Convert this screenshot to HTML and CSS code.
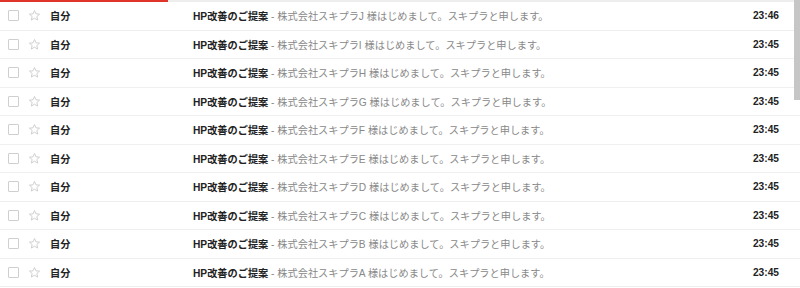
FILE: index.html
```html
<!DOCTYPE html>
<html lang="ja">
<head>
<meta charset="utf-8">
<link rel="stylesheet" href="styles.css">
</head>
<body>
<div class="page">
  <div class="progress"><div class="progress-fill"></div></div>
  <div class="list" id="list"></div>
  <div class="scroll-thumb"></div>
</div>
<template id="row">
  <div class="row">
    <span class="check"></span>
    <svg class="star" viewBox="0 0 24 24" width="13" height="13"><path d="M12 2.8l2.75 6.1 6.6.6-5 4.4 1.5 6.5L12 17l-5.85 3.4 1.5-6.5-5-4.4 6.6-.6z" fill="none" stroke="#c8c8c8" stroke-width="1.6" stroke-linejoin="round"/></svg>
    <span class="sender">自分</span>
    <span class="subject"><b>HP改善のご提案</b><span class="snippet"> - 株式会社スキプラ<span class="letter"></span> 様はじめまして。スキプラと申します。</span></span>
    <span class="time"></span>
  </div>
</template>
<script>
  var letters = ["J","I","H","G","F","E","D","C","B","A"];
  var list = document.getElementById("list");
  var tpl = document.getElementById("row");
  letters.forEach(function (l, i) {
    var n = tpl.content.cloneNode(true);
    n.querySelector(".letter").textContent = l;
    n.querySelector(".time").textContent = i === 0 ? "23:46" : "23:45";
    list.appendChild(n);
  });
</script>
</body>
</html>
```
FILE: styles.css
```css
html, body {
  margin: 0;
  padding: 0;
  background: #fff;
}
.page {
  position: relative;
  width: 800px;
  height: 288px;
  overflow: hidden;
  font-family: "Liberation Sans", "Noto Sans CJK JP", sans-serif;
  font-size: 10.2px;
  color: #222;
}
.progress {
  height: 2px;
  background: #eeeeee;
}
.progress-fill {
  width: 168px;
  height: 2px;
  background: #e0342a;
}
.list {
  display: flex;
  flex-direction: column;
}
.row {
  display: flex;
  align-items: center;
  height: 28.5px;
  box-sizing: border-box;
  border-bottom: 1px solid #efefef;
  padding-left: 8px;
  padding-right: 21px;
}
.check {
  width: 9px;
  height: 9px;
  border: 1px solid #cfcfcf;
  border-radius: 1px;
  flex: none;
}
.star {
  flex: none;
  margin-left: 9px;
}
.sender {
  width: 143px;
  margin-left: 9px;
  font-weight: bold;
  flex: none;
}
.subject {
  flex: 1;
  white-space: nowrap;
  overflow: hidden;
}
.subject b {
  font-weight: bold;
  color: #222;
}
.snippet {
  color: #888;
}
.time {
  font-weight: bold;
  flex: none;
}
.scroll-thumb {
  position: absolute;
  right: 0;
  top: 0;
  width: 6px;
  height: 100px;
  background: #c6c6c6;
}
```
